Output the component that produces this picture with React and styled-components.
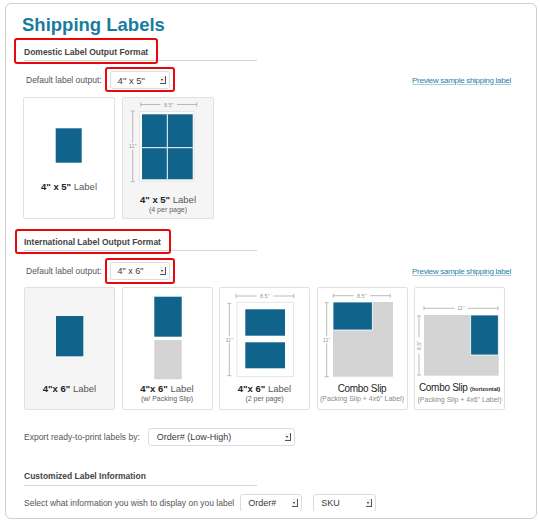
import React from 'react'
import styled, { createGlobalStyle } from 'styled-components'

const BLUE = '#10638a'
const SLIP = '#d4d4d4'
const DIM = '#a9a9a9'

const GlobalStyle = createGlobalStyle`
  body {
    margin:0;
    background:#fff;
    font-family:"Liberation Sans", Arial, sans-serif;
  }
`;

const Panel = styled.div`
  box-sizing:border-box;
  width:532px;
  height:516px;
  margin:3px 0 0 5px;
  padding:10px 25px 0 18px;
  border:1px solid #cfcfcf;
  border-radius:6px;
  overflow:hidden;
`;

const Title = styled.h1`
  margin:0 0 0 -2px;
  font-size:18.5px;
  line-height:22px;
  font-weight:bold;
  color:#187c9e;
`;

const Heading = styled.div`
  position:relative;
  width:233px;
  margin-top:${p => p.$gap}px;
  padding-bottom:2.5px;
  border-bottom:1px solid #d6d6d6;
  font-size:8.5px;
  line-height:12px;
  font-weight:bold;
  color:#444;
`;

const Highlight = styled.span`
  position:absolute;
  left:${p => p.$left}px;
  top:${p => p.$top}px;
  width:${p => p.$w}px;
  height:${p => p.$h}px;
  box-sizing:border-box;
  border:2px solid #e8080b;
  border-radius:3px;
  pointer-events:none;
`;

const Row = styled.div`
  display:flex;
  align-items:center;
  height:${p => p.$h || 18}px;
  margin-top:${p => p.$gap}px;
  padding-left:${p => p.$indent || 0}px;
  overflow:${p => (p.$clip ? 'hidden' : 'visible')};
  font-size:8.5px;
  color:#555;
  white-space:nowrap;
`;

const Marked = styled.div`
  position:relative;
  margin-left:${p => p.$ml}px;
`;

const SelectBox = styled.div`
  box-sizing:border-box;
  display:flex;
  align-items:center;
  justify-content:space-between;
  flex:none;
  width:${p => p.$w}px;
  height:18px;
  margin-left:${p => p.$ml || 0}px;
  padding:0 3px 0 ${p => p.$pl}px;
  background:#fff;
  border:1px solid #dcdcdc;
  border-radius:3px;
  font-size:${p => p.$fs}px;
  color:#3a3a3a;
`;

const Arrow = styled.span`
  position:relative;
  width:5px;
  height:7px;
  border-right:1px solid #555;
  border-bottom:1px solid #555;
  background:#f3f3f3;

  &::after {
    content:'';
    position:absolute;
    left:1px;
    top:3px;
    border-top:2px solid #222;
    border-left:1.5px solid transparent;
    border-right:1.5px solid transparent;
  }
`;

const Preview = styled.a`
  margin-left:auto;
  font-size:8px;
  letter-spacing:-0.3px;
  color:#2a7ea8;
  text-decoration:underline;
  text-decoration-color:#a8cfe0;
  cursor:pointer;
`;

const Cards = styled.div`
  display:flex;
  gap:${p => p.$gap}px;
  margin:${p => p.$top}px 0 0 ${p => p.$shift || 0}px;
`;

const Card = styled.div`
  box-sizing:border-box;
  display:flex;
  flex-direction:column;
  width:${p => p.$w}px;
  height:${p => p.$h}px;
  border:1px solid #e1e1e1;
  border-radius:2px;
  background:${p => (p.$shaded ? '#f5f5f5' : '#fff')};
`;

const Art = styled.svg`
  display:block;
  flex:none;
  font-family:"Liberation Sans", Arial, sans-serif;
`;

const Caption = styled.div`
  font-size:9.5px;
  line-height:11px;
  text-align:center;
  color:#555;
  white-space:nowrap;

  b { color:#222; }
`;

const ComboCaption = styled(Caption)`
  font-size:10px;
  letter-spacing:-0.3px;
  color:#1e1e1e;

  small {
    font-size:5.5px;
    font-weight:bold;
    letter-spacing:0;
  }
`;

const Sub = styled.div`
  font-size:7px;
  line-height:9px;
  text-align:center;
  color:${p => (p.$light ? '#8a8a8a' : '#5e5e5e')};
  white-space:nowrap;
`;

const Select = ({ w, pl = 7, fs = 9, ml, children }) => (
  <SelectBox $w={w} $pl={pl} $fs={fs} $ml={ml}>
    <span>{children}</span>
    <Arrow />
  </SelectBox>
)

const DimH = ({ x1, x2, y, label }) => {
  const mid = (x1 + x2) / 2
  const g = label.length * 1.7 + 1.5
  return (
    <g stroke={DIM} strokeWidth="0.8">
      <line x1={x1} y1={y} x2={mid - g} y2={y} />
      <line x1={mid + g} y1={y} x2={x2} y2={y} />
      <line x1={x1} y1={y - 2} x2={x1} y2={y + 2} />
      <line x1={x2} y1={y - 2} x2={x2} y2={y + 2} />
      <text x={mid} y={y + 2} stroke="none" fill="#999" fontSize="5.5" textAnchor="middle">{label}</text>
    </g>
  )
}

const DimV = ({ x, y1, y2, label, turn }) => {
  const mid = (y1 + y2) / 2
  const g = turn ? label.length * 1.7 + 1.5 : 3.5
  return (
    <g stroke={DIM} strokeWidth="0.8">
      <line x1={x} y1={y1} x2={x} y2={mid - g} />
      <line x1={x} y1={mid + g} x2={x} y2={y2} />
      <line x1={x - 2} y1={y1} x2={x + 2} y2={y1} />
      <line x1={x - 2} y1={y2} x2={x + 2} y2={y2} />
      {turn ? (
        <text x={x + 2} y={mid} stroke="none" fill="#999" fontSize="5.5" textAnchor="middle"
          transform={`rotate(-90 ${x + 2} ${mid})`}>{label}</text>
      ) : (
        <text x={x} y={mid + 2} stroke="none" fill="#999" fontSize="5.5" textAnchor="middle">{label}</text>
      )}
    </g>
  )
}

const Domestic = () => (
  <Cards $gap={7} $top={8} $shift={-1}>
    <Card $w={92} $h={122}>
      <Art width="90" height="83">
        <rect x="31.7" y="30.3" width="26" height="34.4" fill={BLUE} />
      </Art>
      <Caption><b>4" x 5"</b> Label</Caption>
    </Card>
    <Card $w={92} $h={122} $shaded>
      <Art width="90" height="96">
        <DimH x1={17.7} x2={73.7} y={6.5} label={'8.5"'} />
        <DimV x={9.7} y1={13} y2={83.7} label={'11"'} />
        <rect x="16.3" y="13.7" width="54.7" height="69.3" fill="#fff" stroke="#dedede" strokeWidth="0.8" />
        <rect x="19" y="16.3" width="50.7" height="65" fill={BLUE} />
        <line x1="44.3" y1="16.3" x2="44.3" y2="81.3" stroke="#fff" strokeWidth="1" />
        <line x1="19" y1="49.7" x2="69.7" y2="49.7" stroke="#fff" strokeWidth="1" />
      </Art>
      <Caption><b>4" x 5"</b> Label</Caption>
      <Sub>(4 per page)</Sub>
    </Card>
  </Cards>
)

const International = () => (
  <Cards $gap={6.5} $top={7}>
    <Card $w={91} $h={123} $shaded>
      <Art width="89" height="95">
        <rect x="31" y="28" width="27.3" height="40.3" fill={BLUE} />
      </Art>
      <Caption><b>4"x 6"</b> Label</Caption>
    </Card>
    <Card $w={91} $h={123}>
      <Art width="89" height="95">
        <rect x="31.3" y="8.7" width="27.4" height="40" fill={BLUE} />
        <rect x="31.3" y="52" width="27.4" height="39.3" fill={SLIP} />
      </Art>
      <Caption><b>4"x 6"</b> Label</Caption>
      <Sub>(w/ Packing Slip)</Sub>
    </Card>
    <Card $w={91} $h={123}>
      <Art width="89" height="95">
        <DimH x1={16} x2={73.7} y={8} label={'8.5"'} />
        <DimV x={9.3} y1={15.3} y2={87.7} label={'11"'} />
        <rect x="17" y="14.3" width="56.7" height="74.4" fill="#fff" stroke="#dedede" strokeWidth="0.8" />
        <rect x="25.3" y="21.3" width="39.7" height="26.4" fill={BLUE} />
        <rect x="25.3" y="54.3" width="39.7" height="26" fill={BLUE} />
      </Art>
      <Caption><b>4"x 6"</b> Label</Caption>
      <Sub>(2 per page)</Sub>
    </Card>
    <Card $w={91} $h={123}>
      <Art width="89" height="95">
        <DimH x1={15.3} x2={72.3} y={7.7} label={'8.5"'} />
        <DimV x={8.7} y1={14.7} y2={88.7} label={'11"'} />
        <rect x="15" y="14" width="60" height="74.7" fill={SLIP} />
        <rect x="15" y="14" width="39.3" height="28" fill={BLUE} stroke="#fff" strokeWidth="0.8" />
      </Art>
      <ComboCaption>Combo Slip</ComboCaption>
      <Sub $light>(Packing Slip + 4x6" Label)</Sub>
    </Card>
    <Card $w={91} $h={123}>
      <Art width="89" height="94">
        <DimH x1={9} x2={83} y={20.3} label={'11"'} />
        <DimV x={4} y1={28} y2={87} label={'8.5"'} turn />
        <rect x="9" y="27" width="74.7" height="60.7" fill={SLIP} />
        <rect x="55.7" y="27" width="27.6" height="40" fill={BLUE} stroke="#fff" strokeWidth="0.8" />
      </Art>
      <ComboCaption>Combo Slip <small>(horizontal)</small></ComboCaption>
      <Sub $light>(Packing Slip + 4x6" Label)</Sub>
    </Card>
  </Cards>
)

const App = () => {
  return (
    <>
      <GlobalStyle />
      <Panel>
        <Title>Shipping Labels</Title>

        <Heading $gap={9.5}>
          Domestic Label Output Format
          <Highlight $left={-10} $top={-7.5} $w={144} $h={26} />
        </Heading>
        <Row $gap={10} $indent={2}>
          Default label output:
          <Marked $ml={8}>
            <Select w={60} fs={9.5}>4" x 5"</Select>
            <Highlight $left={-5} $top={-4} $w={70} $h={25} />
          </Marked>
          <Preview>Preview sample shipping label</Preview>
        </Row>
        <Domestic />

        <Heading $gap={16.5}>
          International Label Output Format
          <Highlight $left={-9} $top={-6.5} $w={156} $h={25} />
        </Heading>
        <Row $gap={11} $indent={2}>
          Default label output:
          <Marked $ml={8}>
            <Select w={60} fs={9}>4" x 6"</Select>
            <Highlight $left={-5} $top={-4} $w={70} $h={26} />
          </Marked>
          <Preview>Preview sample shipping label</Preview>
        </Row>
        <International />

        <Row $gap={18}>
          Export ready-to-print labels by:
          <Select w={147} pl={8} ml={8}>Order# (Low-High)</Select>
        </Row>

        <Heading $gap={24}>Customized Label Information</Heading>
        <Row $gap={8.5} $h={17} $clip>
          Select what information you wish to display on you label
          <Select w={62} ml={6}>Order#</Select>
          <Select w={63} ml={11}>SKU</Select>
        </Row>
      </Panel>
    </>
  )
}

export default App
